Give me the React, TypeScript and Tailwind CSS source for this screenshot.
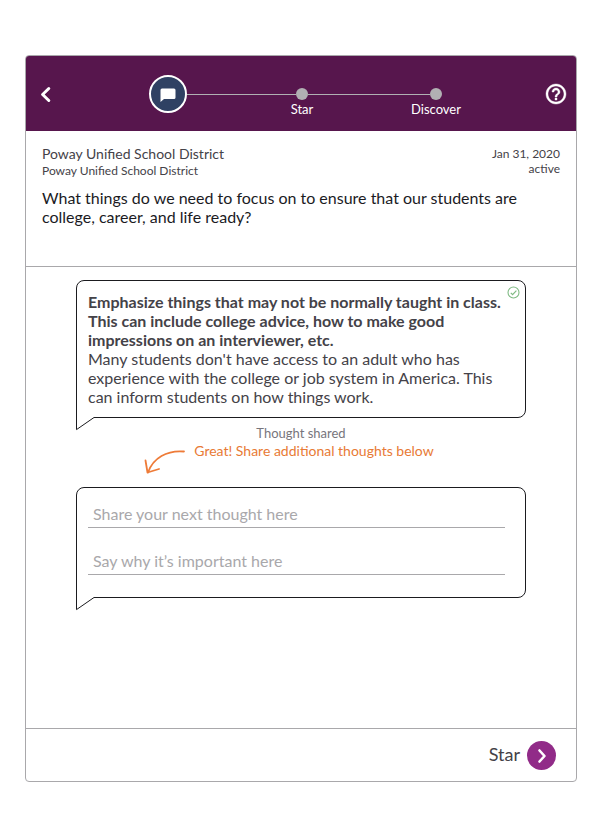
import type { ReactNode } from "react";

function Bubble({ children, className }: { children: ReactNode; className: string }) {
  return (
    <div className={`relative rounded-lg rounded-bl-none border border-[#1b1b1f] ${className}`}>
      {children}
      <svg
        className="absolute top-full -left-px"
        width="19"
        height="14"
        viewBox="0 0 19 14"
        fill="none"
        aria-hidden="true"
      >
        <path d="M0 0H18V1L0.5 13Z" fill="#fff" />
        <path d="M0.5 0V12.6L18 0.5H19" stroke="#1b1b1f" />
      </svg>
    </div>
  );
}

function Step({ label, last = false }: { label: string; last?: boolean }) {
  return (
    <li className="flex flex-col items-center">
      <div className="flex h-[38px] w-full items-center">
        <span className="h-px flex-1 bg-[#b1b0b3]" />
        <span className="size-3 rounded-full bg-[#b1b0b3]" />
        <span className={last ? "h-px flex-1" : "h-px flex-1 bg-[#b1b0b3]"} />
      </div>
      <span className="-mt-3 text-[13px] leading-4 text-white">{label}</span>
    </li>
  );
}

export default function App() {
  return (
    <div className="bg-white pt-[55px] pr-[33px] pb-10 pl-[25px] font-[Lato,sans-serif] text-[#444248]">
      <main className="overflow-hidden rounded border border-[#a9a8ab]">
        <header className="flex h-[75px] items-start justify-between bg-[#57164d] px-2 pt-[19px] text-white">
          <button type="button" aria-label="Back" className="flex h-[38px] w-[26px] items-center">
            <svg width="24" height="24" viewBox="0 0 24 24" fill="none" aria-hidden="true">
              <path d="M14.800 6.500L8.600 12.500L14.800 18.500" stroke="currentColor" strokeWidth="3" strokeLinecap="round" strokeLinejoin="round" />
            </svg>
          </button>
          <ol className="grid w-[402px] grid-cols-3">
            <li className="flex h-[38px] items-center">
              <span className="flex-1" />
              <span className="flex size-[38px] items-center justify-center rounded-full border-2 border-white bg-[#2f4163]">
                <svg width="16" height="16" viewBox="0 0 16 16" aria-label="Share" role="img">
                  <path d="M2 2.500H14Q15.500 2.500 15.500 4V11.500Q15.500 13 14 13H4L0.500 16V4Q0.500 2.500 2 2.500Z" fill="#fff" />
                </svg>
              </span>
              <span className="h-px flex-1 bg-[#b1b0b3]" />
            </li>
            <Step label="Star" />
            <Step label="Discover" last />
          </ol>
          <button type="button" aria-label="Help" className="flex h-[38px] w-6 items-center justify-center">
            <svg width="24" height="24" viewBox="0 0 24 24" fill="currentColor" aria-hidden="true">
              <path d="M11 18h2v-2h-2v2zm1-16C6.480 2 2 6.480 2 12s4.480 10 10 10 10-4.480 10-10S17.520 2 12 2zm0 18c-4.410 0-8-3.590-8-8s3.590-8 8-8 8 3.590 8 8-3.590 8-8 8zm0-14c-2.210 0-4 1.790-4 4h2c0-1.100.9-2 2-2s2 .9 2 2c0 2-3 1.750-3 5h2c0-2.250 3-2.500 3-5 0-2.210-1.790-4-4-4z" stroke="currentColor" strokeWidth="0.4" />
            </svg>
          </button>
        </header>

        <section className="min-h-[136px] border-b border-[#a9a8ab] px-4 pt-3.5">
          <div className="flex justify-between">
            <div>
              <p className="text-sm leading-[17px]">Poway Unified School District</p>
              <p className="text-xs leading-[17px]">Poway Unified School District</p>
            </div>
            <div className="pt-px text-right text-xs leading-[15px]">
              <p>Jan 31, 2020</p>
              <p>active</p>
            </div>
          </div>
          <h1 className="mt-[9px] text-base leading-[19px] text-[#1b1b1f]">
            What things do we need to focus on to ensure that our students are college, career, and life ready?
          </h1>
        </section>

        <section className="min-h-[461px] px-[50px] pt-[13px]">
          <Bubble className="h-[138px] px-[11px] pt-[11px]">
            <p className="text-base leading-[19px] font-bold">
              Emphasize things that may not be normally taught in class. This can include college advice, how to make
              good impressions on an interviewer, etc.
            </p>
            <p className="pr-4 text-base leading-[19px]">
              Many students don't have access to an adult who has experience with the college or job system in America.
              This can inform students on how things work.
            </p>
            <svg
              className="absolute top-[5px] right-[5px]"
              width="13"
              height="13"
              viewBox="0 0 13 13"
              fill="none"
              stroke="#7fba83"
              aria-label="Saved"
              role="img"
            >
              <circle cx="6.500" cy="6.500" r="5.500" strokeWidth="1.100" />
              <path d="M3.800 6.800L5.600 8.600L9.400 4.600" strokeWidth="1.200" />
            </svg>
          </Bubble>

          <div className="relative mt-[7px] text-center leading-[17px]">
            <p className="text-[13px] text-[#77757c]">Thought shared</p>
            <p className="pl-[26px] text-sm leading-[17px] text-[#e87a35]">Great! Share additional thoughts below</p>
            <svg
              className="absolute top-[25px] left-[68px]"
              width="42"
              height="26"
              viewBox="0 0 42 26"
              fill="none"
              stroke="#ee7b38"
              strokeWidth="1.800"
              strokeLinecap="round"
              strokeLinejoin="round"
              aria-hidden="true"
            >
              <path d="M40 1.500C23 0 9 8 4 22.500" />
              <path d="M1.500 10.500L3.500 22.500L15 19" />
            </svg>
          </div>

          <Bubble className="mt-7 h-[111px] pr-5 pl-[11px]">
            <form className="flex flex-col gap-[21px] pt-3.5">
              <input
                type="text"
                aria-label="Your thought"
                placeholder="Share your next thought here"
                className="h-[26px] w-full border-b border-[#a9a8ab] px-[5px] pb-0.5 text-base leading-5 outline-none placeholder:text-[#a9a8ab]"
              />
              <input
                type="text"
                aria-label="Why it is important"
                placeholder="Say why it’s important here"
                className="h-[26px] w-full border-b border-[#a9a8ab] px-[5px] pb-0.5 text-base leading-5 outline-none placeholder:text-[#a9a8ab]"
              />
            </form>
          </Bubble>
        </section>

        <footer className="flex h-[53px] items-center justify-end border-t border-[#a9a8ab] pr-5">
          <button type="button" className="flex items-center gap-[7px] text-lg leading-6">
            <span className="pb-0.5">Star</span>
            <span className="flex size-[29px] items-center justify-center rounded-full bg-[#912b88]">
              <svg width="29" height="29" viewBox="0 0 29 29" fill="none" aria-hidden="true">
                <path d="M12.500 9.500L17.500 15L12.500 20.500" stroke="#fff" strokeWidth="2.600" strokeLinecap="round" strokeLinejoin="round" />
              </svg>
            </span>
          </button>
        </footer>
      </main>
    </div>
  );
}
